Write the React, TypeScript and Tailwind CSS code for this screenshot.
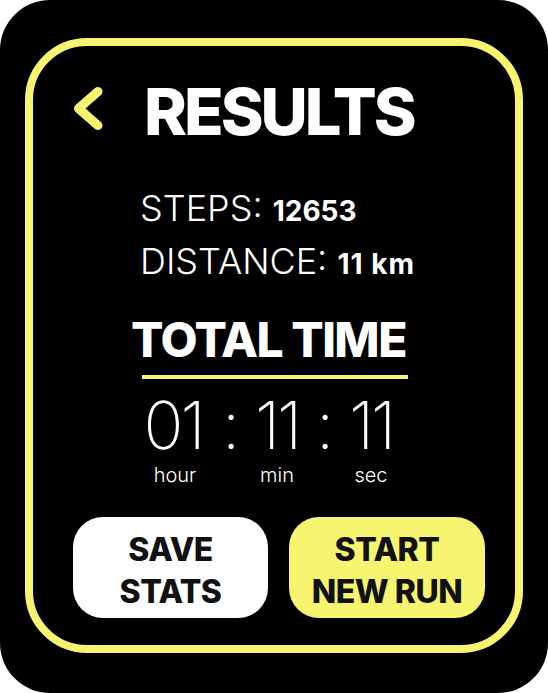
import React from "react";

const Y = "#f7f46f";

export default function App() {
  return (
    <div className="w-[548px] h-[693px] bg-white">
      <div
        className="w-[548px] h-[693px] bg-black rounded-[50px] pt-[38px] px-[25px]"
        style={{ fontFamily: "Inter, 'Noto Sans', sans-serif" }}
      >
        <div className="h-[615px] border-[8px] border-[#f7f46f] rounded-[62px] flex flex-col">
          {/* header */}
          <div className="flex items-start mt-[33px]">
            <svg width="40" height="50" viewBox="0 0 40 50" className="ml-[37px] mt-[5px] shrink-0">
              <polyline
                points="28,7.5 8.5,24.5 28,41.5"
                fill="none"
                stroke={Y}
                strokeWidth="9"
                strokeLinecap="round"
                strokeLinejoin="round"
              />
            </svg>
            <div className="ml-[34px] text-white text-[65px] leading-[65px] font-extrabold tracking-[-3px]">
              RESULTS
            </div>
          </div>

          {/* stats */}
          <div className="mt-[38px] ml-[107px] text-white">
            <div className="text-[36px] leading-[53px] font-light whitespace-nowrap">
              STEPS: <span className="text-[28px] leading-none font-bold">12653</span>
            </div>
            <div className="text-[36px] leading-[53px] font-light whitespace-nowrap">
              DISTANCE: <span className="text-[28px] leading-none font-bold tracking-[1px]">11 km</span>
            </div>
          </div>

          {/* total time */}
          <div className="mt-[28px] flex flex-col items-start">
            <div className="ml-[98px] text-white text-[48px] leading-[48px] font-extrabold tracking-[-1.5px] whitespace-nowrap">
              TOTAL TIME
            </div>
            <div className="mt-[11px] h-[4px] w-[266px] bg-[#f7f46f] ml-[109px]" />
          </div>

          {/* time */}
          <div className="mt-[18px] flex text-white ml-[107px]">
            <div className="w-[70px] flex flex-col items-center">
              <div className="text-[66px] leading-[56px] font-extralight tracking-[-3px] pr-[4px]">01</div>
              <div className="mt-[13px] text-[20px] leading-[18px] font-light">hour</div>
            </div>
            <div className="w-[42px] text-center text-[66px] leading-[56px] font-extralight">:</div>
            <div className="w-[50px] flex flex-col items-center">
              <div className="text-[66px] leading-[56px] font-extralight tracking-[-3px]">11</div>
              <div className="mt-[13px] text-[20px] leading-[18px] font-light">min</div>
            </div>
            <div className="w-[46px] text-center text-[66px] leading-[56px] font-extralight">:</div>
            <div className="w-[46px] flex flex-col items-center">
              <div className="text-[66px] leading-[56px] font-extralight tracking-[-3px]">11</div>
              <div className="mt-[13px] text-[20px] leading-[18px] font-light">sec</div>
            </div>
          </div>

          {/* buttons */}
          <div className="mt-[33px] ml-[40px] flex gap-[21px]">
            <div className="w-[195px] h-[101px] rounded-[30px] bg-white flex items-center justify-center pt-[6px]">
              <div className="text-[#111] text-[32px] leading-[42px] font-extrabold text-center tracking-[-0.5px]">
                SAVE
                <br />
                STATS
              </div>
            </div>
            <div className="w-[196px] h-[101px] rounded-[30px] bg-[#f7f46f] flex items-center justify-center pt-[6px]">
              <div className="text-[#111] text-[32px] leading-[42px] font-extrabold text-center tracking-[-0.5px]">
                START
                <br />
                NEW RUN
              </div>
            </div>
          </div>
        </div>
      </div>
    </div>
  );
}
